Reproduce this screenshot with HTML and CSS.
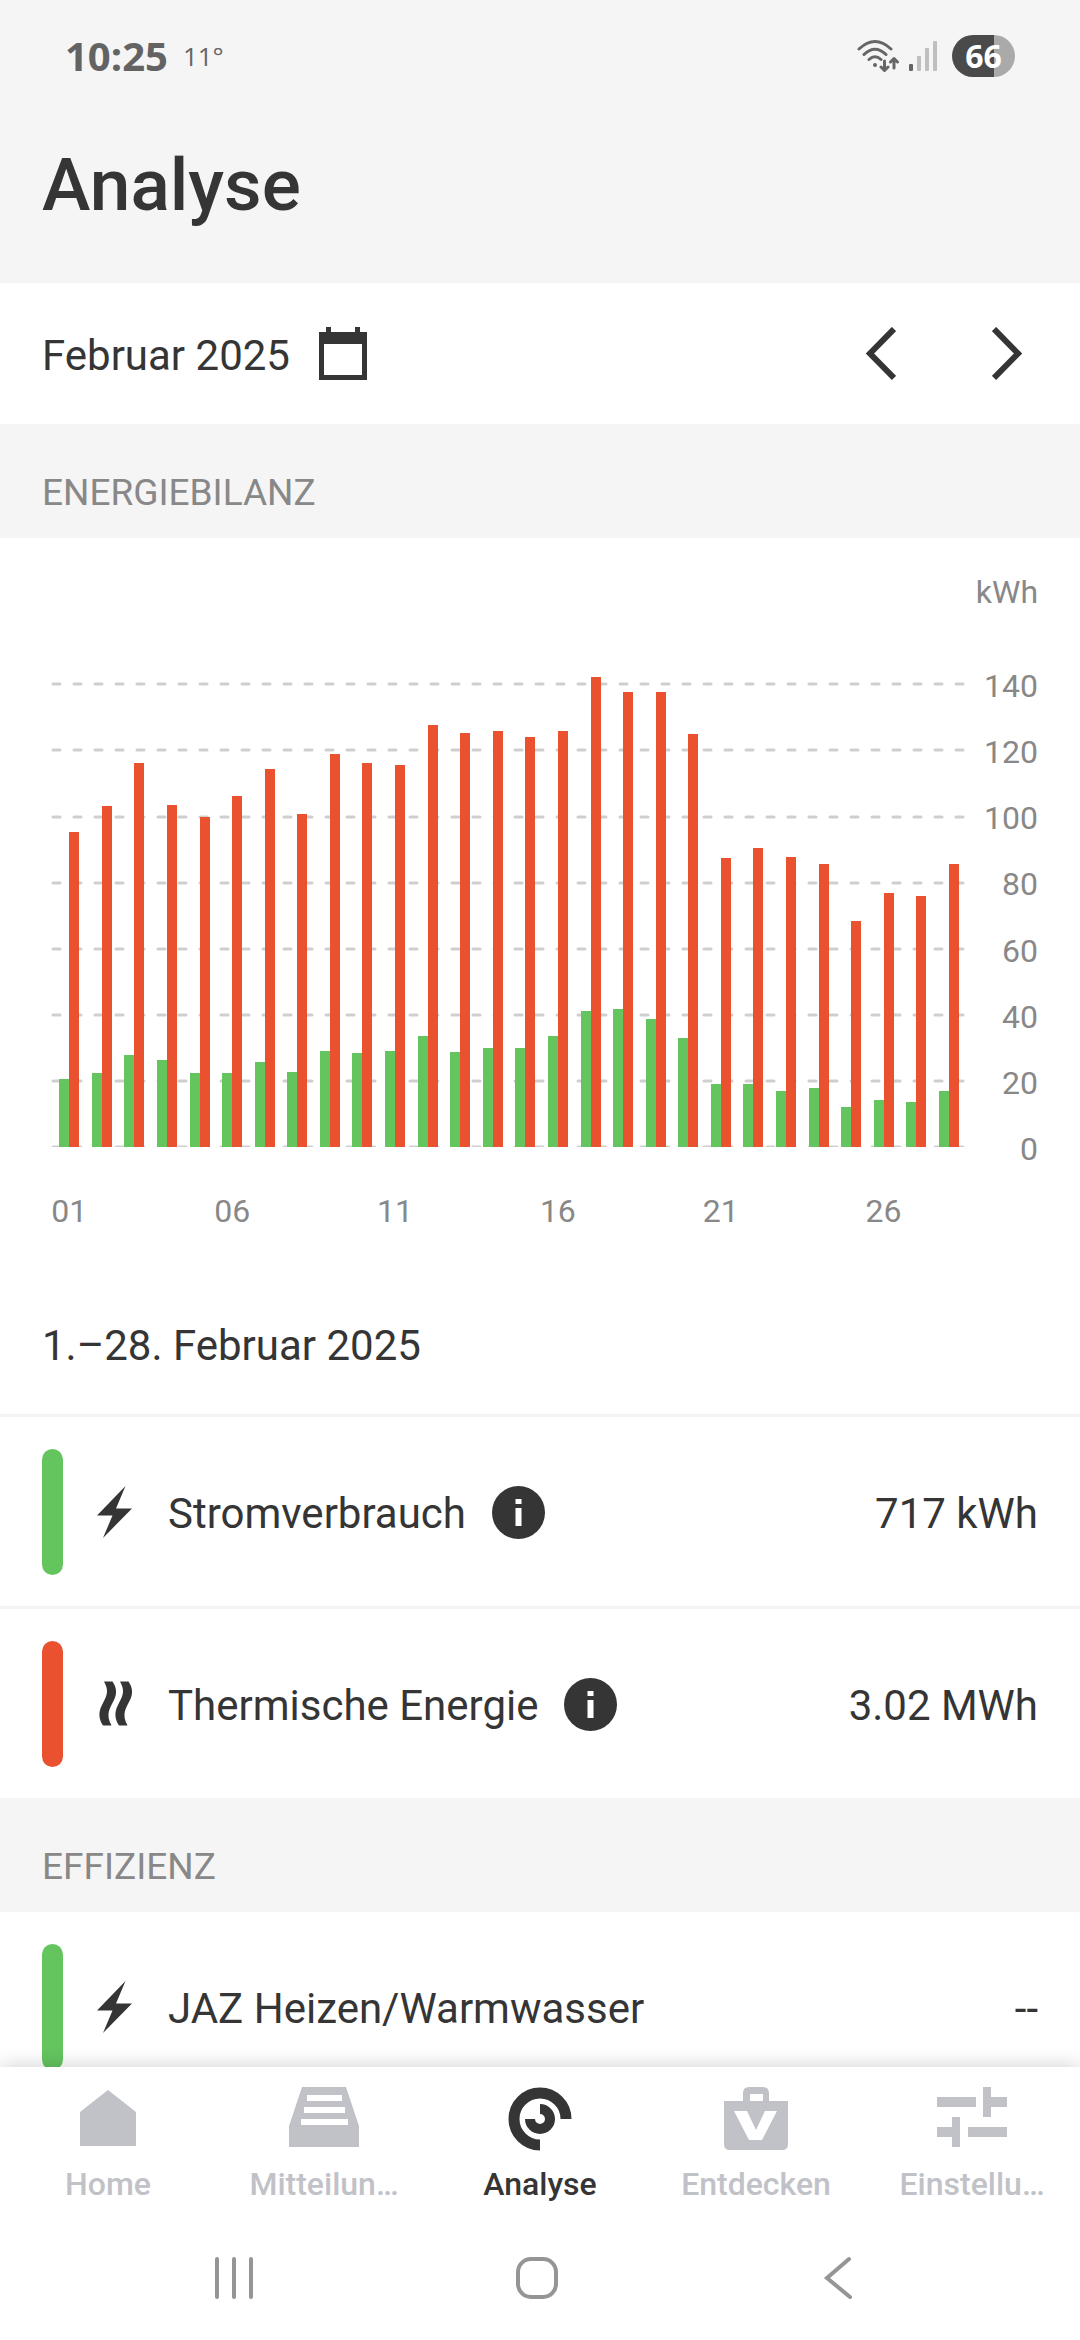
FILE: index.html
```html
<!DOCTYPE html>
<html lang="de">
<head>
<meta charset="utf-8">
<meta name="viewport" content="width=device-width, initial-scale=1">
<title>Analyse</title>
<link rel="stylesheet" href="styles.css">
</head>
<body>
<div class="app">
  <div class="status">
    <span class="status-time">10:25</span>
    <span class="status-temp">11°</span>
    <svg class="status-wifi" viewBox="0 0 42 34" aria-hidden="true">
      <g fill="none" stroke="#666" stroke-width="3" stroke-linecap="round" stroke-linejoin="round">
        <path d="M2 10Q18 -5 34 10M7 15.500Q18 5 29 15.500M12 20.500Q18 15 24 20.500"/>
        <path d="M27.500 22V31M24 28L27.500 31.500L31 28M37 29V20M33.500 23L37 19.500L40.500 23"/>
      </g>
      <circle cx="18" cy="26" r="2" fill="#666"/>
    </svg>
    <svg class="status-signal" viewBox="0 0 28 30" aria-hidden="true">
      <rect x="0" y="23" width="4" height="7" rx="1" fill="#666"/>
      <rect x="8" y="15" width="4" height="15" rx="1" fill="#bfbfbf"/>
      <rect x="16" y="7" width="4" height="23" rx="1" fill="#bfbfbf"/>
      <rect x="24" y="0" width="4" height="30" rx="1" fill="#bfbfbf"/>
    </svg>
    <span class="status-battery">66</span>
  </div>

  <header class="header"><h1 class="title">Analyse</h1></header>

  <main class="content">
    <div class="period">
      <button class="period-date" type="button">
        <span class="period-text">Februar 2025</span>
        <svg class="icon-calendar" viewBox="0 0 48 54" aria-hidden="true">
          <path fill="#353535" fill-rule="evenodd" d="M0 5H7V0H12V5H36V0H41V5H48V53H0ZM5 17V48H43V17Z"/>
        </svg>
      </button>
      <button class="arrow" type="button" aria-label="Vorheriger Monat">
        <svg viewBox="0 0 30 54" aria-hidden="true"><path d="M28 2L4 26.500L28 51" fill="none" stroke="#353535" stroke-width="6"/></svg>
      </button>
      <button class="arrow" type="button" aria-label="Nächster Monat">
        <svg viewBox="0 0 30 54" aria-hidden="true"><path d="M2 2L26 26.500L2 51" fill="none" stroke="#353535" stroke-width="6"/></svg>
      </button>
    </div>

    <h2 class="section">ENERGIEBILANZ</h2>
    <div class="chart">
      <div class="unit">kWh</div>
      <div class="plot">
        <svg class="grid-lines" aria-hidden="true">
          <g stroke="#cfcfcf" stroke-width="3" stroke-linecap="round" stroke-dasharray="7 14">
            <line x1="2" x2="100%" y1="33" y2="33"/>
            <line x1="2" x2="100%" y1="99" y2="99"/>
            <line x1="2" x2="100%" y1="166" y2="166"/>
            <line x1="2" x2="100%" y1="232" y2="232"/>
            <line x1="2" x2="100%" y1="298" y2="298"/>
            <line x1="2" x2="100%" y1="364" y2="364"/>
            <line x1="2" x2="100%" y1="430" y2="430"/>
            <line x1="2" x2="100%" y1="496" y2="496"/>
          </g>
        </svg>
        <div class="days">
          <div class="day"><i class="power" style="height:13.7%"></i><i class="heat" style="height:63.5%"></i></div>
          <div class="day"><i class="power" style="height:14.9%"></i><i class="heat" style="height:68.7%"></i></div>
          <div class="day"><i class="power" style="height:18.5%"></i><i class="heat" style="height:77.4%"></i></div>
          <div class="day"><i class="power" style="height:17.5%"></i><i class="heat" style="height:69%"></i></div>
          <div class="day"><i class="power" style="height:14.9%"></i><i class="heat" style="height:66.6%"></i></div>
          <div class="day"><i class="power" style="height:14.9%"></i><i class="heat" style="height:70.7%"></i></div>
          <div class="day"><i class="power" style="height:17.1%"></i><i class="heat" style="height:76.2%"></i></div>
          <div class="day"><i class="power" style="height:15.2%"></i><i class="heat" style="height:67.1%"></i></div>
          <div class="day"><i class="power" style="height:19.3%"></i><i class="heat" style="height:79.2%"></i></div>
          <div class="day"><i class="power" style="height:19%"></i><i class="heat" style="height:77.5%"></i></div>
          <div class="day"><i class="power" style="height:19.4%"></i><i class="heat" style="height:77.1%"></i></div>
          <div class="day"><i class="power" style="height:22.3%"></i><i class="heat" style="height:85%"></i></div>
          <div class="day"><i class="power" style="height:19.1%"></i><i class="heat" style="height:83.5%"></i></div>
          <div class="day"><i class="power" style="height:20%"></i><i class="heat" style="height:83.9%"></i></div>
          <div class="day"><i class="power" style="height:20%"></i><i class="heat" style="height:82.6%"></i></div>
          <div class="day"><i class="power" style="height:22.4%"></i><i class="heat" style="height:83.8%"></i></div>
          <div class="day"><i class="power" style="height:27.4%"></i><i class="heat" style="height:94.7%"></i></div>
          <div class="day"><i class="power" style="height:27.8%"></i><i class="heat" style="height:91.7%"></i></div>
          <div class="day"><i class="power" style="height:25.9%"></i><i class="heat" style="height:91.8%"></i></div>
          <div class="day"><i class="power" style="height:22%"></i><i class="heat" style="height:83.2%"></i></div>
          <div class="day"><i class="power" style="height:12.7%"></i><i class="heat" style="height:58.3%"></i></div>
          <div class="day"><i class="power" style="height:12.8%"></i><i class="heat" style="height:60.3%"></i></div>
          <div class="day"><i class="power" style="height:11.3%"></i><i class="heat" style="height:58.4%"></i></div>
          <div class="day"><i class="power" style="height:11.9%"></i><i class="heat" style="height:57.1%"></i></div>
          <div class="day"><i class="power" style="height:8.1%"></i><i class="heat" style="height:45.6%"></i></div>
          <div class="day"><i class="power" style="height:9.5%"></i><i class="heat" style="height:51.3%"></i></div>
          <div class="day"><i class="power" style="height:9%"></i><i class="heat" style="height:50.6%"></i></div>
          <div class="day"><i class="power" style="height:11.3%"></i><i class="heat" style="height:57.1%"></i></div>
        </div>
      </div>
      <div class="y-axis">
        <span>140</span><span>120</span><span>100</span><span>80</span><span>60</span><span>40</span><span>20</span><span>0</span>
      </div>
      <div class="x-axis">
        <span>01</span><span>06</span><span>11</span><span>16</span><span>21</span><span>26</span>
      </div>
    </div>

    <h3 class="range">1.–28. Februar 2025</h3>
    <ul class="list">
      <li class="row">
        <span class="pill power"></span>
        <svg class="row-icon" viewBox="0 0 36 52" aria-hidden="true"><path d="M28.500 0L0 29.500H15.500L6 52L35 22.500H19Z" fill="#353535"/></svg>
        <span class="row-label">Stromverbrauch</span>
        <button class="info" type="button" aria-label="Info Stromverbrauch">
          <svg viewBox="0 0 53 53" aria-hidden="true"><circle cx="26.500" cy="26.500" r="26.500" fill="#353535"/><path d="M23.500 13H29.500V18H23.500ZM23.500 22H29.500V40H23.500Z" fill="#fff"/></svg>
        </button>
        <span class="row-value">717 kWh</span>
      </li>
      <li class="row">
        <span class="pill heat"></span>
        <svg class="row-icon" viewBox="0 0 36 52" aria-hidden="true"><path d="M7 3.500H15.500C20 10 20 16 17 22C12.500 31 8.500 36 14.500 47.500H6C1.500 41 1.500 34 4.500 28C9 19 13 14 7 3.500ZM23 3.500H31.500C36 10 36 16 33 22C28.500 31 24.500 36 30.500 47.500H22C17.500 41 17.500 34 20.500 28C25 19 29 14 23 3.500Z" fill="#353535"/></svg>
        <span class="row-label">Thermische Energie</span>
        <button class="info" type="button" aria-label="Info Thermische Energie">
          <svg viewBox="0 0 53 53" aria-hidden="true"><circle cx="26.500" cy="26.500" r="26.500" fill="#353535"/><path d="M23.500 13H29.500V18H23.500ZM23.500 22H29.500V40H23.500Z" fill="#fff"/></svg>
        </button>
        <span class="row-value">3.02 MWh</span>
      </li>
    </ul>

    <h2 class="section">EFFIZIENZ</h2>
    <ul class="list list-plain">
      <li class="row">
        <span class="pill power"></span>
        <svg class="row-icon" viewBox="0 0 36 52" aria-hidden="true"><path d="M28.500 0L0 29.500H15.500L6 52L35 22.500H19Z" fill="#353535"/></svg>
        <span class="row-label">JAZ Heizen/Warmwasser</span>
        <span class="row-value">--</span>
      </li>
    </ul>
  </main>

  <nav class="tabs">
    <a class="tab" href="#home">
      <svg viewBox="0 0 72 64" aria-hidden="true"><path fill="#c1c2c8" d="M36 3L64 25V59H8V25Z"/></svg>
      <span>Home</span>
    </a>
    <a class="tab" href="#mitteilungen">
      <svg viewBox="0 0 72 64" aria-hidden="true"><path fill="#c1c2c8" fill-rule="evenodd" d="M14 0H58L71 39V60H1V39ZM19 8V14H54V8ZM16 20V26H57V20ZM13 32V38H60V32Z"/></svg>
      <span>Mitteilun…</span>
    </a>
    <a class="tab tab-active" href="#analyse" aria-current="page">
      <svg viewBox="0 0 72 64" aria-hidden="true"><g fill="none" stroke="#353535"><path d="M62 32A26 26 0 1 0 36 58" stroke-width="11"/><path d="M36 22A10 10 0 1 1 26 32" stroke-width="10"/></g></svg>
      <span>Analyse</span>
    </a>
    <a class="tab" href="#entdecken">
      <svg viewBox="0 0 72 64" aria-hidden="true"><path fill="#c1c2c8" fill-rule="evenodd" d="M4 14H23V6Q23 0 29 0H43Q49 0 49 6V14H68V57Q68 63 62 63H10Q4 63 4 57ZM30 7V14H43V7ZM14 24L29 53H42L57 24H45L36 43L27 24Z"/></svg>
      <span>Entdecken</span>
    </a>
    <a class="tab" href="#einstellungen">
      <svg viewBox="0 0 72 64" aria-hidden="true"><path fill="#c1c2c8" d="M1 10H40V20H1ZM47 0H55V10H71V20H55V30H47ZM1 40H16V30H24V60H16V50H1ZM32 40H71V50H32Z"/></svg>
      <span>Einstellu…</span>
    </a>
  </nav>

  <div class="system">
    <button type="button" aria-label="Letzte Apps"><svg viewBox="0 0 44 44" aria-hidden="true"><path d="M5 3V41M22 3V41M39 3V41" fill="none" stroke="#959595" stroke-width="4" stroke-linecap="round"/></svg></button>
    <button type="button" aria-label="Startbildschirm"><svg viewBox="0 0 44 44" aria-hidden="true"><rect x="3" y="3" width="38" height="38" rx="13" fill="none" stroke="#959595" stroke-width="4"/></svg></button>
    <button type="button" aria-label="Zurück"><svg viewBox="0 0 44 44" aria-hidden="true"><path d="M32 3L10 22L33 41" fill="none" stroke="#959595" stroke-width="4" stroke-linecap="round"/></svg></button>
  </div>
</div>
</body>
</html>
```
FILE: styles.css
```css
* {
  box-sizing: border-box;
}

body,
h1,
h2,
h3,
ul {
  margin: 0;
  padding: 0;
}

body {
  font-family: Roboto, "Noto Sans", sans-serif;
  font-size: 42px;
  line-height: 50px;
  color: #353535;
  background: #fff;
}

button {
  padding: 0;
  border: 0;
  background: none;
  font: inherit;
  color: inherit;
}

svg {
  display: block;
  flex: none;
}

.app {
  display: flex;
  flex-direction: column;
  height: 100vh;
  overflow: hidden;
}

/* status bar */
.status {
  display: flex;
  align-items: center;
  height: 112px;
  padding: 0 65px;
  background: #f5f5f5;
}

.status-time {
  font-family: "Open Sans", sans-serif;
  font-size: 40px;
  font-weight: 700;
  color: #636363;
}

.status-temp {
  margin-left: 15px;
  font-family: "Open Sans", sans-serif;
  font-size: 26px;
  color: #666;
}

.status-wifi {
  width: 42px;
  height: 34px;
  margin-left: auto;
}

.status-signal {
  width: 28px;
  height: 30px;
  margin: 0 15px 0 10px;
}

.status-battery {
  width: 63px;
  height: 42px;
  border-radius: 21px;
  font-family: "Open Sans", sans-serif;
  font-size: 32px;
  font-weight: 700;
  line-height: 42px;
  text-align: center;
  color: #fff;
  background: linear-gradient(90deg, #4a4a4a 66%, #aaa 66%);
}

.header {
  height: 171px;
  padding: 29px 42px 0;
  background: #f5f5f5;
}

.title {
  font-size: 73px;
  font-weight: 500;
  line-height: 88px;
}

.content {
  flex: 1;
  min-height: 0;
  overflow: hidden;
}

/* month picker */
.period {
  display: flex;
  align-items: center;
  gap: 96px;
  height: 141px;
  padding: 0 58px 0 42px;
}

.period-date {
  display: flex;
  align-items: center;
  gap: 29px;
  margin-right: auto;
}

.period-text,
.row-label,
.row-value {
  padding-top: 4px;
}

.icon-calendar {
  width: 48px;
  height: 54px;
}

.arrow svg {
  width: 30px;
  height: 54px;
}

.section {
  padding: 47px 42px 23px;
  font-size: 37px;
  font-weight: 400;
  line-height: 44px;
  color: #888;
  background: #f5f5f5;
}

/* bar chart */
.chart {
  display: grid;
  grid-template-columns: 1fr 73px;
  padding: 35px 42px 0 51px;
  font-size: 32px;
  line-height: 38px;
  color: #888;
}

.unit {
  grid-column: 1 / -1;
  text-align: right;
}

.plot {
  display: grid;
  margin-top: 40px;
}

.grid-lines,
.days {
  grid-area: 1 / 1;
  width: 100%;
  height: 496px;
}

.days {
  display: flex;
  padding-left: 2px;
}

.day {
  display: flex;
  flex: 1;
  align-items: flex-end;
  justify-content: center;
}

.day i {
  width: 10px;
}

.power {
  background: #64c55f;
}

.heat {
  background: #ea512f;
}

.y-axis {
  display: flex;
  flex-direction: column;
  justify-content: space-between;
  height: 501px;
  margin-top: 56px;
  text-align: right;
}

.x-axis {
  display: grid;
  grid-template-columns: repeat(28, minmax(0, 1fr));
  justify-items: center;
  margin-top: 24px;
  padding-left: 2px;
}

.x-axis span:nth-child(2) {
  grid-column: 6;
}

.x-axis span:nth-child(3) {
  grid-column: 11;
}

.x-axis span:nth-child(4) {
  grid-column: 16;
}

.x-axis span:nth-child(5) {
  grid-column: 21;
}

.x-axis span:nth-child(6) {
  grid-column: 26;
}

/* readings */
.range {
  padding: 91px 42px 43px;
  font-size: 42px;
  font-weight: 400;
}

.list {
  list-style: none;
}

.row {
  display: flex;
  align-items: center;
  padding: 32px 42px 31px;
  border-top: 3px solid #f4f4f4;
}

.list-plain .row {
  border-top: 0;
}

.pill {
  width: 21px;
  height: 126px;
  border-radius: 11px;
}

.row-icon {
  width: 36px;
  height: 52px;
  margin: 0 35px 0 34px;
}

.info {
  margin-left: 26px;
}

.info svg {
  width: 53px;
  height: 53px;
}

.row-value {
  margin-left: auto;
}

/* bottom navigation */
.tabs {
  position: relative;
  display: flex;
  padding-top: 20px;
  background: #fff;
  box-shadow: 0 0 20px rgba(0, 0, 0, 0.2);
}

.tab {
  display: flex;
  flex: 1 1 0;
  flex-direction: column;
  align-items: center;
  gap: 14px;
  min-width: 0;
  font-size: 32px;
  font-weight: 500;
  line-height: 38px;
  color: #c1c2c8;
  text-decoration: none;
}

.tab-active {
  color: #353535;
}

.tab svg {
  width: 72px;
  height: 64px;
}

.system {
  position: relative;
  display: flex;
  align-items: flex-start;
  justify-content: space-between;
  height: 137px;
  padding: 53px 219px 0 212px;
  background: #fff;
}

.system svg {
  width: 44px;
  height: 44px;
}
```
